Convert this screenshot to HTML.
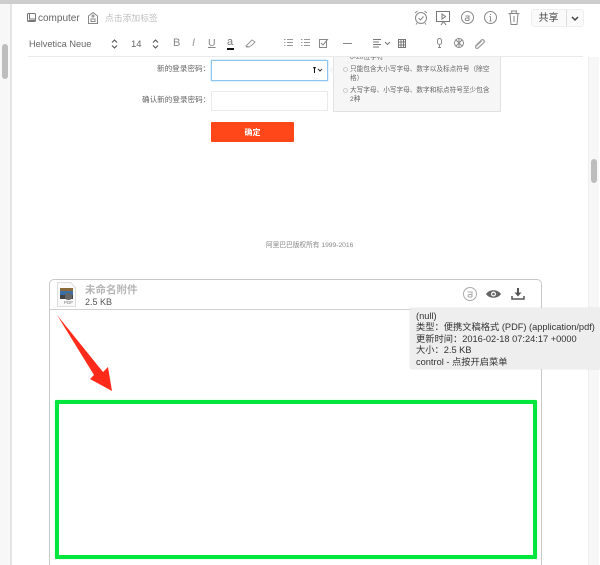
<!DOCTYPE html>
<html style="overflow:hidden"><head><meta charset="utf-8">
<style>
html,body{margin:0;padding:0;background:#fff;overflow:hidden;width:600px;height:565px}
#w{width:600px;height:565px;position:relative;overflow:hidden;font-family:"Liberation Sans","Noto Sans CJK SC",sans-serif;color:#555;filter:blur(.3px)}
.a{position:absolute;white-space:nowrap}
svg{position:absolute;overflow:visible}
</style></head><body><div id="w">
<div class="a" style="left:0;top:0;width:600px;height:4px;background:#cdcdcd"></div>
<div class="a" style="left:0;top:4px;width:10px;height:561px;background:#f7f7f7"></div>
<div class="a" style="left:10px;top:4px;width:2px;height:561px;background:#e4e4e4"></div>
<div class="a" style="left:2px;top:44px;width:6px;height:35px;border-radius:3px;background:#bdbdbd"></div>
<div class="a" style="left:588px;top:57px;width:11px;height:508px;background:#f7f7f7;border-left:1px solid #eee;box-sizing:border-box"></div>
<div class="a" style="left:591px;top:159px;width:6px;height:24px;border-radius:3px;background:#bdbdbd"></div>

<!-- header left -->
<svg style="left:27px;top:13px" width="9" height="10" fill="none" stroke="#777" stroke-width="1"><rect x=".5" y=".5" width="8" height="8" rx="1"/><path d="M2.500 .5v5.500h6M1.500 7.500h7"/></svg>
<div class="a" style="left:38px;top:12px;font-size:10px;color:#666;line-height:14px">computer</div>
<svg style="left:88px;top:12px" width="10" height="12" fill="none" stroke="#888" stroke-width="1"><path d="M.5 4 5 .5 9.500 4v7.500h-9z"/><circle cx="5" cy="4" r="1"/><rect x="3" y="7" width="4" height="2.500"/></svg>
<div class="a" style="left:105px;top:11px;font-size:8.800px;color:#c0c0c0;line-height:14px">点击添加标签</div>

<!-- header right icons -->
<svg style="left:414px;top:10px" width="14" height="15" fill="none" stroke="#888" stroke-width="1"><circle cx="7" cy="8" r="5.500"/><path d="M4.500 8l2 2 3-3.500M1 3l2.500-2M13 3l-2.500-2M3 13l-1 1.500M11 13l1 1.500"/></svg>
<svg style="left:436px;top:11px" width="15" height="15" fill="none" stroke="#777" stroke-width="1"><path d="M.5.500h13v10h-13zM6 3l3.500 2.500L6 8zM5 14l2.500-3.500L10 14"/></svg>
<svg style="left:461px;top:11px" width="13" height="13" fill="none" stroke="#888" stroke-width="1"><circle cx="6.500" cy="6.500" r="6"/><path d="M4.500 5h3.500v4.500M8 7H5.500a1.200 1.200 0 0 0 0 2.500H8"/></svg>
<svg style="left:484px;top:11px" width="13" height="13" fill="none" stroke="#888" stroke-width="1"><circle cx="6.500" cy="6.500" r="6"/><path d="M6.500 5.500v4.500M5.500 5.500h1M5.500 10h2M6.500 3v1"/></svg>
<svg style="left:508px;top:10px" width="12" height="15" fill="none" stroke="#888" stroke-width="1"><path d="M.5 3.500h11M4 3.500 3.500 1h5L8 3.500M2 3.500l1 11h6l1-11M6 6v6"/></svg>
<div class="a" style="left:531px;top:9px;width:51px;height:16px;border:1px solid #eee;border-radius:3px;background:#fafafa"></div>
<div class="a" style="left:566px;top:10px;width:1px;height:16px;background:#ddd"></div>
<div class="a" style="left:538.500px;top:12px;font-size:10px;color:#444;line-height:14px">共享</div>
<svg style="left:571px;top:16px" width="8" height="5" fill="none" stroke="#444" stroke-width="1.500"><path d="M1 1l3 3 3-3"/></svg>

<!-- toolbar -->
<div class="a" style="left:29px;top:38px;font-size:9.200px;color:#666;line-height:13px">Helvetica Neue</div>
<svg style="left:111px;top:39px" width="7" height="10" fill="none" stroke="#555" stroke-width="1.100"><path d="M1 3.500 3.500 1 6 3.500M1 6.500 3.500 9 6 6.500"/></svg>
<div class="a" style="left:131px;top:38px;font-size:9.500px;color:#666;line-height:13px">14</div>
<svg style="left:152px;top:39px" width="7" height="10" fill="none" stroke="#555" stroke-width="1.100"><path d="M1 3.500 3.500 1 6 3.500M1 6.500 3.500 9 6 6.500"/></svg>
<div class="a" style="left:173px;top:37px;font-size:11px;color:#888;line-height:12px">B</div>
<div class="a" style="left:192px;top:37px;font-size:11px;color:#999;line-height:12px;font-style:italic">I</div>
<div class="a" style="left:208px;top:37px;font-size:10.500px;color:#888;line-height:12px;text-decoration:underline">U</div>
<div class="a" style="left:227px;top:36px;font-size:11px;color:#777;line-height:12px">a</div>
<div class="a" style="left:227px;top:48px;width:7px;height:2px;background:#111"></div>
<svg style="left:245px;top:39px" width="11" height="9" fill="none" stroke="#999"><path d="M1 7l3-3 3-3 3 2-3 3-3 2zM1 8h3"/></svg>
<svg style="left:284px;top:38px" width="9" height="9" fill="none" stroke="#999"><path d="M3 1.500h6M3 4.500h6M3 7.500h6M0 1.500h1.500M0 4.500h1.500M0 7.500h1.500"/></svg>
<svg style="left:301px;top:38px" width="9" height="9" fill="none" stroke="#999"><path d="M3 1.500h6M3 4.500h6M3 7.500h6M0 1.500h1.500M0 4.500h1.500M0 7.500h1.500"/></svg>
<svg style="left:319px;top:38px" width="10" height="10" fill="none" stroke="#888"><path d="M.5 1.500h7v8h-7zM2 5l2 2 5-6"/></svg>
<div class="a" style="left:343px;top:43px;width:9px;height:1px;background:#888"></div>
<svg style="left:373px;top:39px" width="18" height="9" fill="none" stroke="#777"><path d="M0 .5h8M0 3h6M0 5.500h8M0 8h6M12 3l2.500 2.500L17 3"/></svg>
<svg style="left:398px;top:39px" width="8" height="9" fill="none" stroke="#777"><path d="M.5.500h7v8h-7zM.5 3h7M.5 6h7M3 .5v8M5.500 .5v8"/></svg>
<svg style="left:437px;top:38px" width="5" height="10" fill="none" stroke="#888"><rect x=".5" y=".5" width="4" height="6" rx="2"/><path d="M2.500 7v2.500M1 9.500h3"/></svg>
<svg style="left:454px;top:38px" width="10" height="10" fill="none" stroke="#888"><circle cx="5" cy="5" r="4.500"/><path d="M2 2l6 6M8 2 2 8M5 .5v9"/></svg>
<svg style="left:474px;top:38px" width="11" height="10" fill="none" stroke="#999" stroke-width="1.200"><path d="M1.500 8 7.500 2a1.800 1.800 0 0 1 2.500 2.500L4 10a1.300 1.300 0 0 1-2-2L7.500 3"/></svg>
<div class="a" style="left:28px;top:56px;width:555px;height:1px;background:#eaeaea"></div>

<!-- form -->
<div class="a" style="left:157px;top:63px;font-size:7.600px;color:#666;line-height:12px">新的登录密码：</div>
<div class="a" style="left:211px;top:60px;width:115px;height:19px;border:1px solid #8fc4ee;box-shadow:0 0 2px #a8d4f5;background:#fff"></div>
<svg style="left:312px;top:66px" width="11" height="8"><path d="M1 1h3L3 3v4H2V3z" fill="#111"/><path d="M6 3l2 2 2-2" fill="none" stroke="#333"/></svg>
<div class="a" style="left:142px;top:94px;font-size:7.600px;color:#666;line-height:12px">确认新的登录密码：</div>
<div class="a" style="left:211px;top:91px;width:115px;height:18px;border:1px solid #eaeaea"></div>
<div class="a" style="left:333px;top:57px;width:166px;height:54px;background:#f6f6f6;border:1px solid #e2e2e2;border-top:none"></div>
<svg style="left:330px;top:66px" width="4" height="8" fill="none" stroke="#eee"><path d="M3.500 .5 .5 4l3 3.500"/></svg>
<div class="a" style="left:350px;top:52px;font-size:6.700px;color:#666;line-height:11px;clip-path:inset(5px 0 0 0)">6-20位字符</div>
<div class="a" style="left:350px;top:65px;font-size:6.650px;color:#666;line-height:9px">只能包含大小写字母、数字以及标点符号（除空<br>格）</div>
<div class="a" style="left:350px;top:86px;font-size:6.650px;color:#666;line-height:9px">大写字母、小写字母、数字和标点符号至少包含<br>2种</div>
<div class="a" style="left:343px;top:67px;width:3px;height:3px;border:1px solid #ccc;border-radius:50%"></div>
<div class="a" style="left:343px;top:88px;width:3px;height:3px;border:1px solid #ccc;border-radius:50%"></div>
<div class="a" style="left:211px;top:122px;width:83px;height:20px;background:#ff4719;border-radius:1px;color:#fff;font-size:8px;font-weight:bold;text-align:center;line-height:21px">确定</div>
<div class="a" style="left:266px;top:240px;font-size:6.700px;color:#888;line-height:11px">阿里巴巴版权所有 1999-2016</div>

<!-- attachment -->
<div class="a" style="left:49px;top:279px;width:491px;height:300px;border:1px solid #c9c9c9;border-radius:5px 5px 0 0"></div>
<div class="a" style="left:50px;top:309px;width:491px;height:1px;background:#d0d0d0"></div>
<svg style="left:57px;top:282px" width="19" height="25"><path d="M.5.500h13l5 5v19H.5z" fill="#fafafa" stroke="#ddd"/><rect x="3" y="6" width="13" height="4" fill="#8a6a3a"/><rect x="3" y="9" width="13" height="4" fill="#3b6ea5"/><rect x="3" y="13" width="13" height="4" fill="#444"/><rect x="8" y="11" width="7" height="7" rx="3" fill="#666"/></svg>
<div class="a" style="left:64px;top:300px;font-size:4.500px;color:#777;line-height:6px">PDF</div>
<div class="a" style="left:85px;top:283px;font-size:10.500px;color:#b5b5b5;font-weight:bold;line-height:14px">未命名附件</div>
<div class="a" style="left:85px;top:296px;font-size:9px;color:#555;line-height:12px">2.5 KB</div>
<svg style="left:463px;top:287px" width="14" height="14" fill="none" stroke="#aaa"><circle cx="7" cy="7" r="6.500"/><path d="M4.500 5H9v5M9 7.500H6a1.300 1.300 0 0 0 0 2.500h3"/></svg>
<svg style="left:486px;top:289px" width="15" height="10"><path d="M0 5C3 0 12 0 15 5 12 10 3 10 0 5z" fill="#666"/><circle cx="7.500" cy="5" r="2.500" fill="#fff"/><circle cx="7.500" cy="5" r="1.300" fill="#666"/></svg>
<svg style="left:511px;top:288px" width="14" height="12" fill="none"><path d="M7 0v6" stroke="#555" stroke-width="2"/><path d="M3.500 4.500h7L7 8.500z" fill="#555"/><path d="M1 8v3h12V8" stroke="#555" stroke-width="1.500"/></svg>

<!-- tooltip -->
<div class="a" style="left:410px;top:308px;width:190px;height:61px;background:#eeeeee;border-radius:2px 0 0 2px;box-shadow:0 0 1px #bbb;z-index:2"></div>
<div class="a" style="left:416px;top:310.500px;font-size:9.250px;color:#333;line-height:11.600px;z-index:3">(null)<br>类型：便携文稿格式 (PDF) (application/pdf)<br>更新时间：2016-02-18 07:24:17 +0000<br>大小：2.5 KB<br>control - 点按开启菜单</div>

<!-- arrow -->
<svg style="left:0;top:0" width="600" height="565"><path d="M57 315 L103 372 L108 367 L112 391 L90 379 L94 375 Z" fill="#ff2a1a"/></svg>

<!-- green box -->
<div class="a" style="left:54.500px;top:399.500px;width:482px;height:159.500px;border:4px solid #00e63c;box-sizing:border-box;border-radius:1px;box-shadow:0 0 1px #7ff29a"></div>
</div></body></html>
